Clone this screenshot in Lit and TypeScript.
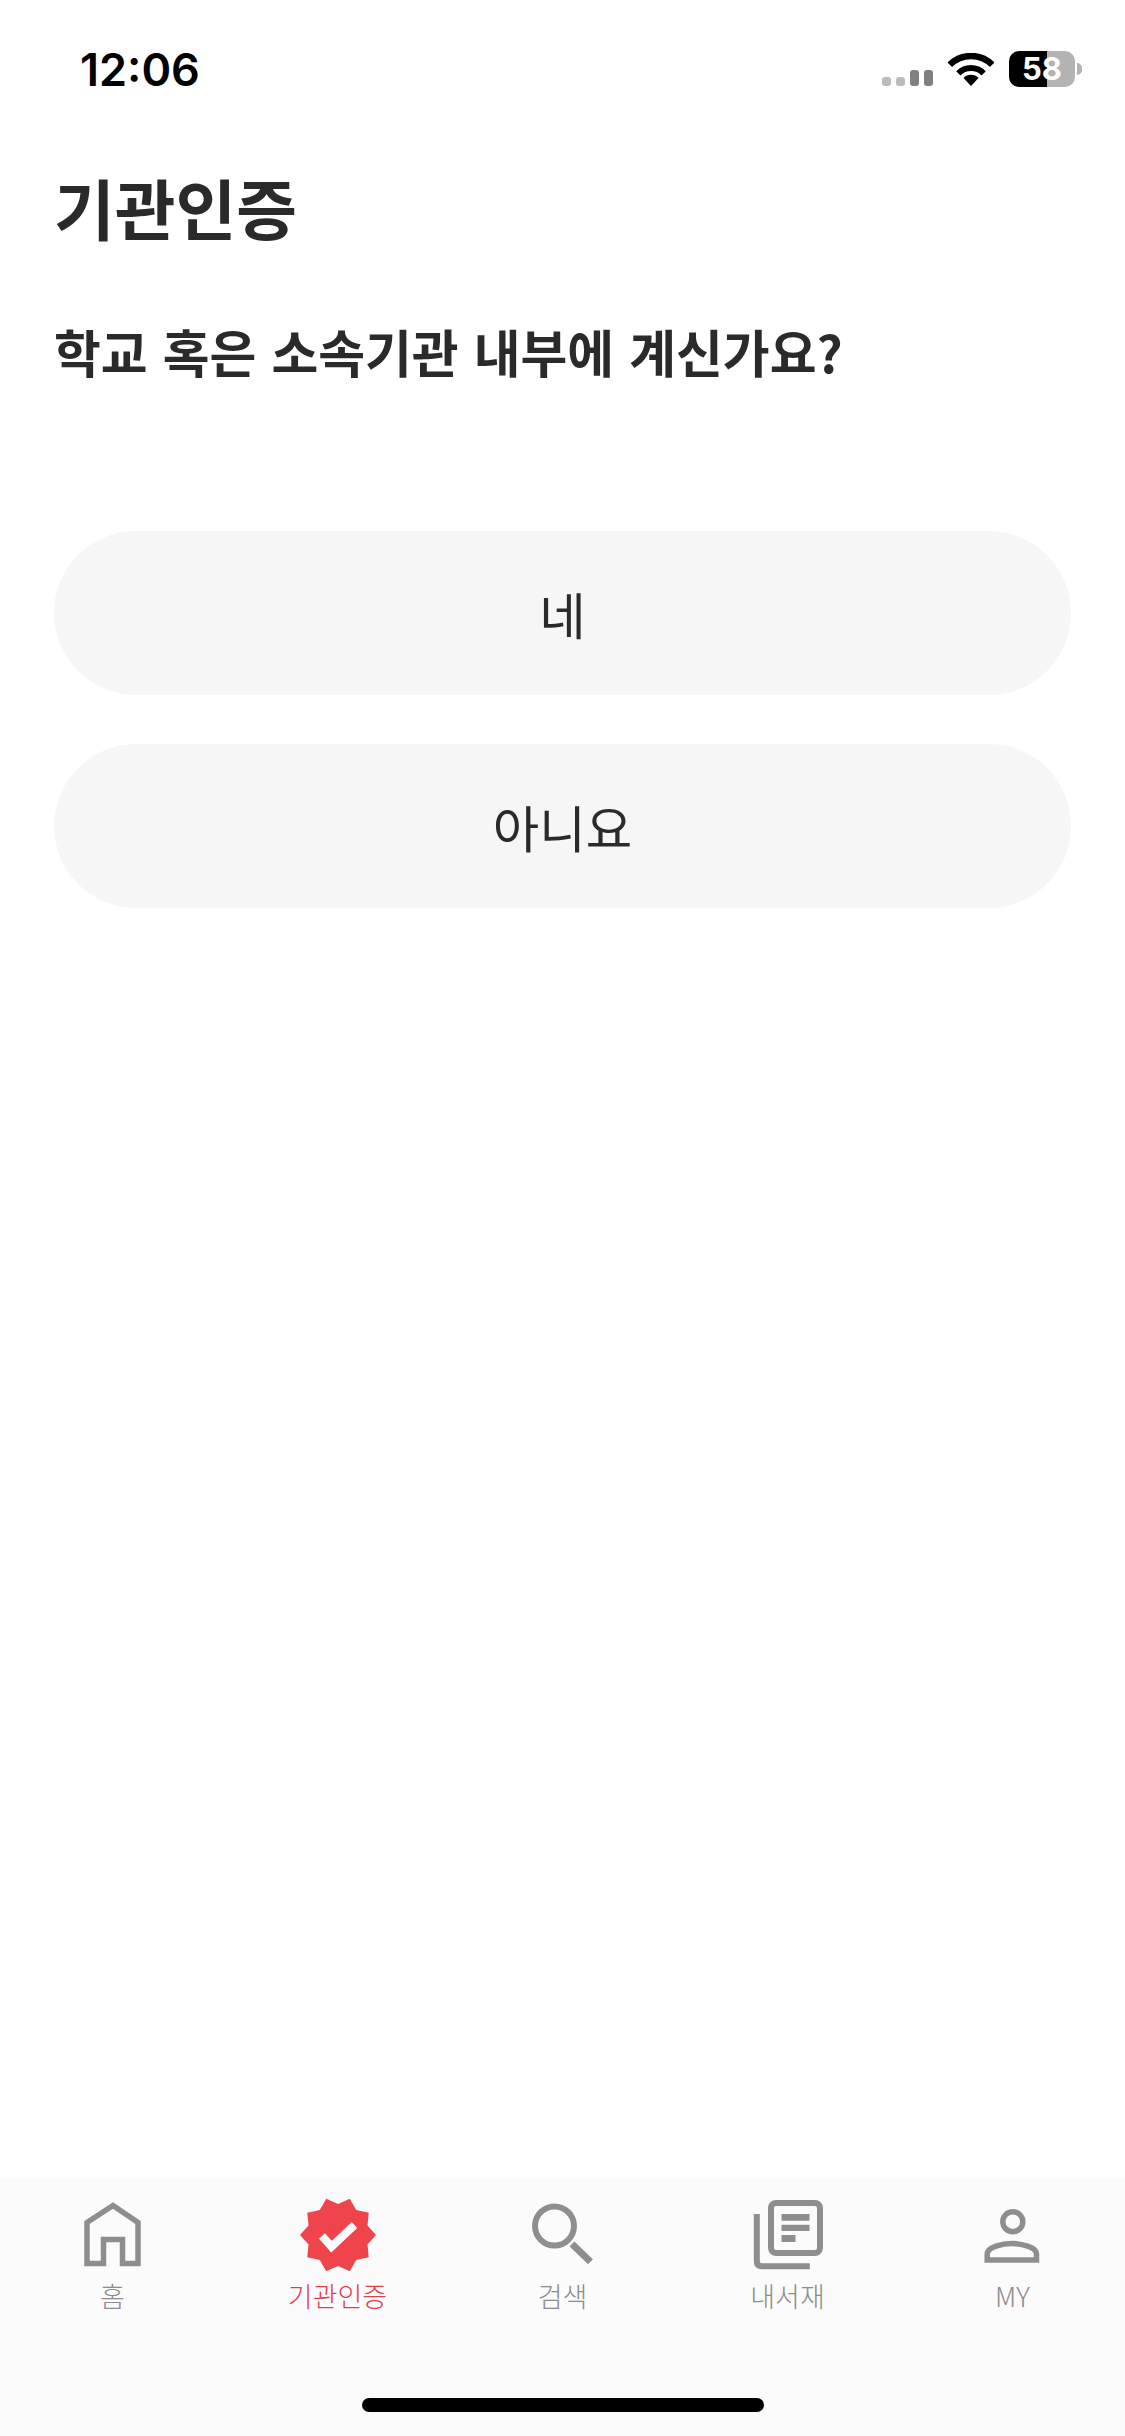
import { LitElement, html, css, svg } from "lit";
import { customElement } from "lit/decorators.js";

const badgePoints = Array.from({ length: 20 }, (_, i) => {
  const r = i % 2 === 0 ? 38 : 31;
  const a = ((-72 + i * 18) * Math.PI) / 180;
  return `${(40 + r * Math.cos(a)).toFixed(2)},${(40 + r * Math.sin(a)).toFixed(2)}`;
}).join(" ");

const icons = {
  home: svg`<path d="M14 68.5V27.5L40 10.5L65 27.5V68.5H49.5V44.5H30.5V68.5Z" fill="none" stroke="#8e8e8e" stroke-width="5.5"/>`,
  badge: svg`<polygon points=${badgePoints} fill="#ef444c"/><path d="M24 41L33.5 51.7L56.5 30" fill="none" stroke="#fff" stroke-width="8"/>`,
  search: svg`<circle cx="31.5" cy="31" r="19.5" fill="none" stroke="#8e8e8e" stroke-width="6"/><path d="M49 49L67.5 66.7" stroke="#8e8e8e" stroke-width="7" fill="none"/>`,
  library: svg`<rect x="23" y="8" width="49" height="50" rx="5" fill="none" stroke="#8e8e8e" stroke-width="6"/><path d="M8.8 19V66.3Q8.8 71.3 13.8 71.3H61.8" fill="none" stroke="#8e8e8e" stroke-width="6"/><path d="M33.5 19H61.5V25.7H33.5ZM33.5 29.7H61.5V36H33.5ZM33.5 40H47.5V47H33.5Z" fill="#8e8e8e"/>`,
  user: svg`<circle cx="39.8" cy="26.7" r="10" fill="none" stroke="#8e8e8e" stroke-width="5.5"/><path d="M14.2 65V59C14.2 52 30 48.5 39 48.5S63.5 52 63.5 59V65Z" fill="none" stroke="#8e8e8e" stroke-width="5.5"/>`,
};

const tabs = [
  { label: "홈", icon: icons.home, active: false },
  { label: "기관인증", icon: icons.badge, active: true },
  { label: "검색", icon: icons.search, active: false },
  { label: "내서재", icon: icons.library, active: false },
  { label: "MY", icon: icons.user, active: false },
];

@customElement("app-root")
export class AppRoot extends LitElement {
  static styles = css`
    :host {
      display: flex;
      flex-direction: column;
      width: 1125px;
      height: 2436px;
      background: #fff;
      font-family: "Noto Sans CJK KR", "Noto Sans", sans-serif;
      color: #2a2a2a;
    }
    .status {
      display: flex;
      align-items: center;
      height: 138px;
      padding: 0 43px 0 80px;
      box-sizing: border-box;
      flex: none;
    }
    .time {
      font-family: Inter, sans-serif;
      font-weight: 600;
      font-size: 45px;
      line-height: 1;
      color: #000;
      flex: 1;
    }
    .signal {
      display: flex;
      align-items: flex-end;
      gap: 5px;
      height: 16px;
      margin-right: 15px;
      margin-top: 18px;
    }
    .signal i {
      width: 9px;
      height: 9px;
      border-radius: 3px;
      background: #bcbcbc;
    }
    .signal i.on {
      height: 16px;
      background: #808080;
    }
    .wifi {
      width: 46px;
      height: 33px;
      margin-right: 15px;
    }
    .battery {
      width: 66px;
      height: 36px;
      border-radius: 10px;
      background: linear-gradient(90deg, #000 57.5%, #b3b3b3 57.5%);
      color: #fff;
      font-family: Inter, sans-serif;
      font-weight: 700;
      font-size: 31px;
      line-height: 36px;
      text-align: center;
    }
    .nub {
      width: 5px;
      height: 12px;
      margin-left: 2px;
      border-radius: 0 6px 6px 0;
      background: #b3b3b3;
    }
    main {
      flex: 1;
      display: flex;
      flex-direction: column;
      padding: 0 54px;
    }
    h1 {
      margin: 29px 0 0;
      font-size: 66px;
      line-height: 1.2;
      font-weight: 700;
    }
    h2 {
      margin: 71px 0 0;
      font-size: 50.9px;
      word-spacing: 3.5px;
      line-height: 68px;
      font-weight: 700;
    }
    .choices {
      display: flex;
      flex-direction: column;
      gap: 49px;
      margin-top: 146px;
    }
    .choice {
      height: 164px;
      border-radius: 82px;
      background: #f6f6f6;
      display: flex;
      align-items: center;
      justify-content: center;
      font-size: 50.5px;
      line-height: 1;
    }
    .tabbar {
      flex: none;
      height: 259px;
      background: #fbfbfb;
      display: flex;
      flex-direction: column;
      align-items: center;
    }
    .tabs {
      align-self: stretch;
      display: grid;
      grid-template-columns: repeat(5, 1fr);
      padding-top: 18px;
    }
    .tab {
      display: flex;
      flex-direction: column;
      align-items: center;
      color: #8c8c8c;
      font-size: 27px;
      font-weight: 300;
      line-height: 34px;
    }
    .tab.active {
      color: #e03f4b;
    }
    .tab svg {
      width: 80px;
      height: 80px;
      margin-bottom: 4px;
    }
    .indicator {
      width: 402px;
      height: 14px;
      border-radius: 7px;
      background: #000;
      margin-top: auto;
      margin-bottom: 24px;
    }
  `;

  render() {
    return html`
      <div class="status">
        <span class="time">12:06</span>
        <div class="signal"><i></i><i></i><i class="on"></i><i class="on"></i></div>
        <svg class="wifi" viewBox="0 0 46 33">
          <path d="M1.8 11.8A30 30 0 0 1 44.2 11.8" fill="none" stroke="#000" stroke-width="6.5"/>
          <path d="M10.3 20.3A18 18 0 0 1 35.7 20.3" fill="none" stroke="#000" stroke-width="6"/>
          <path d="M23 33L15.5 25A10.5 10.5 0 0 1 30.5 25Z" fill="#000"/>
        </svg>
        <div class="battery">58</div>
        <div class="nub"></div>
      </div>
      <main>
        <h1>기관인증</h1>
        <h2>학교 혹은 소속기관 내부에 계신가요?</h2>
        <div class="choices">
          <div class="choice">네</div>
          <div class="choice">아니요</div>
        </div>
      </main>
      <nav class="tabbar">
        <div class="tabs">
          ${tabs.map(
            (t) => html`<div class="tab ${t.active ? "active" : ""}">
              <svg viewBox="0 0 80 80">${t.icon}</svg>
              <span>${t.label}</span>
            </div>`
          )}
        </div>
        <div class="indicator"></div>
      </nav>
    `;
  }
}
